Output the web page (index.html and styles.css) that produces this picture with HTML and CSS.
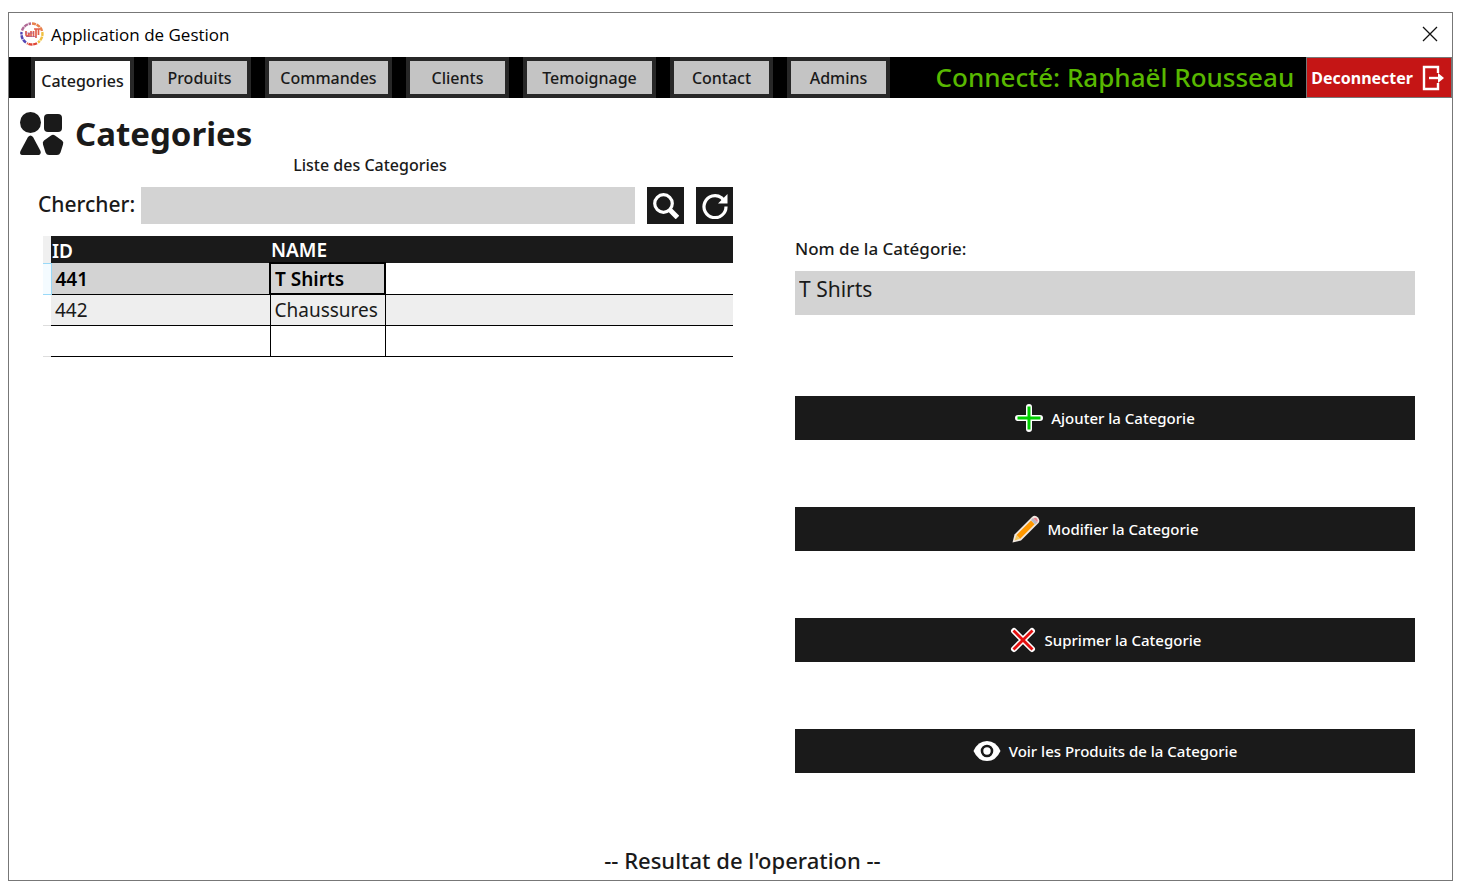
FILE: index.html
```html
<!DOCTYPE html>
<html lang="fr">
<head>
<meta charset="utf-8">
<title>Application de Gestion</title>
<link rel="stylesheet" href="styles.css">
</head>
<body>
<div class="window">
  <header class="titlebar">
    <svg class="app-logo" viewBox="0 0 24 24" aria-hidden="true">
      <g fill="none" stroke-width="2.400" stroke-dasharray="4 .7">
        <path d="M12 1.500A10.500 10.500 0 0 1 22 9" stroke="#e8804c"/>
        <path d="M22.300 10A10.500 10.500 0 0 1 18 20.500" stroke="#f0c040"/>
        <path d="M17 21.200A10.500 10.500 0 0 1 7 21.200" stroke="#df4534"/>
        <path d="M6 20.600A10.500 10.500 0 0 1 1.600 10" stroke="#5146b4"/>
        <path d="M2 8.500A10.500 10.500 0 0 1 11 1.500" stroke="#b06a96"/>
      </g>
      <path d="M6 9v4q2 3 3-2v4M11 9v6M13.500 9v6M14 7h6M16 7v9M18.500 7v6" fill="none" stroke="#e2604c" stroke-width="1.700"/>
      <path d="M6 14.500h10M5 11h9" stroke="#a05a9c" stroke-width="1" opacity=".6"/>
    </svg>
    <span class="app-name">Application de Gestion</span>
    <button class="close" type="button" aria-label="Fermer">
      <svg viewBox="0 0 16 16"><path d="M1 1l14 14M15 1L1 15" stroke="#111" stroke-width="1.300"/></svg>
    </button>
  </header>

  <nav class="navbar">
    <div class="tabs">
      <button class="tab tab-active" type="button">Categories</button>
      <button class="tab" type="button">Produits</button>
      <button class="tab" type="button">Commandes</button>
      <button class="tab" type="button">Clients</button>
      <button class="tab" type="button">Temoignage</button>
      <button class="tab" type="button">Contact</button>
      <button class="tab" type="button">Admins</button>
    </div>
    <span class="user">Connecté: Raphaël Rousseau</span>
    <button class="logout" type="button">Deconnecter
      <svg viewBox="0 0 24 26" fill="none" stroke="#fff" stroke-width="2.400"><path d="M17 8V2H3v22h14v-6"/><path d="M8 13h11"/><path d="M17 8l6 5-6 5z" fill="#fff" stroke="none"/></svg>
    </button>
  </nav>

  <div class="heading">
    <svg viewBox="0 0 44 44" fill="#1a1a1a" aria-hidden="true">
      <circle cx="10.500" cy="10.500" r="10.500"/>
      <rect x="24" y="2" width="18" height="18" rx="4"/>
      <path d="M8 25q2.500-3 5 0l7.500 14q1 4-3 4H3q-4 0-2.500-4z"/>
      <path d="M31 23.500q2-1.500 4 0l7 5q2 1.500 1 4l-2.500 8q-1 2.500-3.500 2.500h-8q-2.500 0-3.500-2.500l-2.500-8q-.8-2.500 1-4z"/>
    </svg>
    <h1>Categories</h1>
  </div>

  <main class="content">
    <section class="list">
      <h2 class="list-title">Liste des Categories</h2>
      <form class="search">
        <label for="search">Chercher:</label>
        <input id="search" type="text">
        <button type="button" aria-label="Chercher">
          <svg viewBox="0 0 26 26" fill="none" stroke="#fff"><circle cx="10.500" cy="10.500" r="8.800" stroke-width="3.200"/><path d="M17 17l7.500 7.500" stroke-width="5"/></svg>
        </button>
        <button type="button" aria-label="Actualiser">
          <svg viewBox="0 0 26 26" fill="none" stroke="#fff"><path d="M24 13.500A11 11 0 1 1 19.500 4.800l2 2" stroke-width="3.200"/><path d="M25.500 1v9.500H16z" fill="#fff" stroke="none"/></svg>
        </button>
      </form>
      <table class="grid">
        <thead>
          <tr><th class="marker"></th><th class="col-id">ID</th><th class="col-name">NAME</th><th></th></tr>
        </thead>
        <tbody>
          <tr class="selected"><td class="marker"></td><td>441</td><td class="focused">T Shirts</td><td class="rest"></td></tr>
          <tr class="alternate"><td class="marker"></td><td>442</td><td>Chaussures</td><td class="rest"></td></tr>
          <tr><td class="marker"></td><td></td><td></td><td class="rest"></td></tr>
        </tbody>
      </table>
    </section>

    <section class="editor">
      <label for="name">Nom de la Catégorie:</label>
      <input id="name" type="text" value="T Shirts">
      <div class="actions">
        <button type="button">
          <svg viewBox="0 0 28 28" stroke-linecap="round"><path d="M14 3v22M3 14h22" stroke="#fff" stroke-width="6"/><path d="M14 2.500v23M2.500 14h23" stroke="#00d000" stroke-width="3" stroke-linecap="butt"/></svg>
          Ajouter la Categorie
        </button>
        <button type="button">
          <svg viewBox="0 0 28 28"><path d="M.5 27.500l2-8L20 2q3-2.500 6 .5 2.500 3 .5 5.500L9 25.500z" fill="#f1e8e0"/><path d="M4.500 20L19 5.500l3.700 3.700L8.200 23.700z" fill="#ff9800"/><path d="M4.500 20l3.700 3.700L2.500 25.500z" fill="#f4c860"/><path d="M19 5l2-2 4.500 4.500-2.500 2z" fill="#b9b9c0"/><path d="M21.500 3.500q2-1.500 3.500.2 1.500 1.800.2 3.500z" fill="#ed8590"/></svg>
          Modifier la Categorie
        </button>
        <button type="button">
          <svg viewBox="0 0 28 28" stroke-linecap="round"><path d="M5 5l18 18M23 5L5 23" stroke="#fff" stroke-width="6"/><path d="M4.500 4.500l19 19M23.500 4.500l-19 19" stroke="#e31010" stroke-width="2.800" stroke-linecap="butt"/></svg>
          Suprimer la Categorie
        </button>
        <button type="button">
          <svg viewBox="0 0 28 28"><path d="M.5 14Q5 4 14 4t13.500 10Q23 24 14 24T.5 14z" fill="#fff"/><circle cx="14" cy="14" r="5" fill="#fff" stroke="#1a1a1a" stroke-width="2.600"/></svg>
          Voir les Produits de la Categorie
        </button>
      </div>
    </section>
  </main>

  <footer class="status">-- Resultat de l'operation --</footer>
</div>
</body>
</html>
```
FILE: styles.css
```css
* { box-sizing: border-box; }
body {
  margin: 0;
  min-height: 100vh;
  padding: 12px 10px 11px 8px;
  display: flex;
  background: #fff;
  color: #1a1a1a;
  font-family: "Noto Sans", "Open Sans", sans-serif;
  font-size: 16px;
  font-weight: 500;
}
button, input { font: inherit; border: 0; border-radius: 0; margin: 0; padding: 0; }
svg { display: block; flex: none; }
.window { flex: 1; display: flex; flex-direction: column; border: 1px solid #777; }

.titlebar { height: 44px; display: flex; align-items: center; padding: 0 14px 2px 11px; color: #000; }
.app-logo { width: 24px; height: 24px; }
.app-name { flex: 1; margin-left: 7px; font-family: "Open Sans", sans-serif; font-size: 17px; font-weight: 400; }
.close { background: none; }
.close svg { width: 16px; height: 16px; }

.navbar { height: 41px; display: flex; background: #000; }
.tabs { display: flex; gap: 14px; padding-left: 22px; }
.tab {
  min-width: 103px;
  padding: 0;
  border: 4px solid #272727;
  background: #c4c4c4;
  color: #1a1a1a;
}
.tab:nth-child(3) { min-width: 127px; }
.tab:nth-child(5) { min-width: 133px; }
.tab-active { padding: 2px 0 0; border-bottom: 0; background: #fff; }
.user { flex: 1; padding-right: 12px; text-align: right; font-size: 26px; line-height: 41px; color: #58b800; white-space: nowrap; }
.logout {
  display: flex; align-items: center; gap: 8px; padding: 0 6px 0 4px;
  border: 1px solid #777; background: #c51515; color: #fff; font-weight: 700;
}
.logout svg { width: 24px; height: 26px; }

.heading { display: flex; align-items: center; gap: 11px; height: 59px; padding: 13px 11px 0; }
.heading svg { width: 44px; height: 44px; }
h1 { margin: 0; font-size: 33px; line-height: 44px; font-weight: 700; }

.content { display: grid; grid-template-columns: 690fr 620fr; gap: 62px; padding: 0 37px 0 34px; }
.list-title { margin: 0 0 13px; padding-right: 36px; font-size: 16px; line-height: 17px; font-weight: 500; text-align: center; }
.search { display: flex; gap: 12px; margin-left: -5px; }
.search label { font-size: 21px; line-height: 35px; margin-right: -6px; }
.search input { flex: 1; min-width: 0; height: 37px; padding: 0 4px; background: #d3d3d3; font-size: 20px; }
.search button { width: 37px; height: 37px; display: grid; place-items: center; background: #1a1a1a; }
.search svg { width: 26px; height: 26px; }

.grid { width: 100%; margin-top: 12px; border-collapse: collapse; table-layout: fixed; font-size: 19px; line-height: 24px; font-weight: 400; }
.grid th { height: 27px; padding: 2px 0 0 1px; background: #1a1a1a; color: #fff; font-weight: 600; text-align: left; }
.grid td { height: 31px; padding: 1px 4px 0; border: solid #000; border-width: 0 1px 1px 0; }
.grid .marker { width: 8px; padding: 0; border-color: #ddd; border-right-width: 0; }
.grid th.marker { background: #f0f0f0; }
.col-id { width: 219px; }
.col-name { width: 115px; }
.grid .rest { border-right: 0; }
.selected td { background: #d3d3d3; color: #000; font-weight: 600; }
.selected .marker { background: #f4fbff; border: 1px solid #99d9f8; border-left: 0; }
.selected .rest { background: #fff; }
.grid .focused { border: 2px solid #000; }
.alternate td { background: #eee; }
.alternate .marker { background: #fff; }

.editor { padding-top: 83px; }
.editor label { display: block; font-size: 17px; line-height: 18px; }
.editor input { width: 100%; height: 44px; margin-top: 13px; padding: 0 4px 8px; background: #d3d3d3; color: #1a1a1a; font-size: 21px; font-weight: 400; }
.actions { display: grid; gap: 67px; margin-top: 81px; }
.actions button {
  height: 44px; display: flex; align-items: center; justify-content: center; gap: 8px;
  background: #1a1a1a; color: #fff; font-size: 15px;
}
.actions svg { width: 28px; height: 28px; }
.status { margin-top: auto; padding: 0 0 6px 24px; text-align: center; font-size: 22px; line-height: 28px; }
```
